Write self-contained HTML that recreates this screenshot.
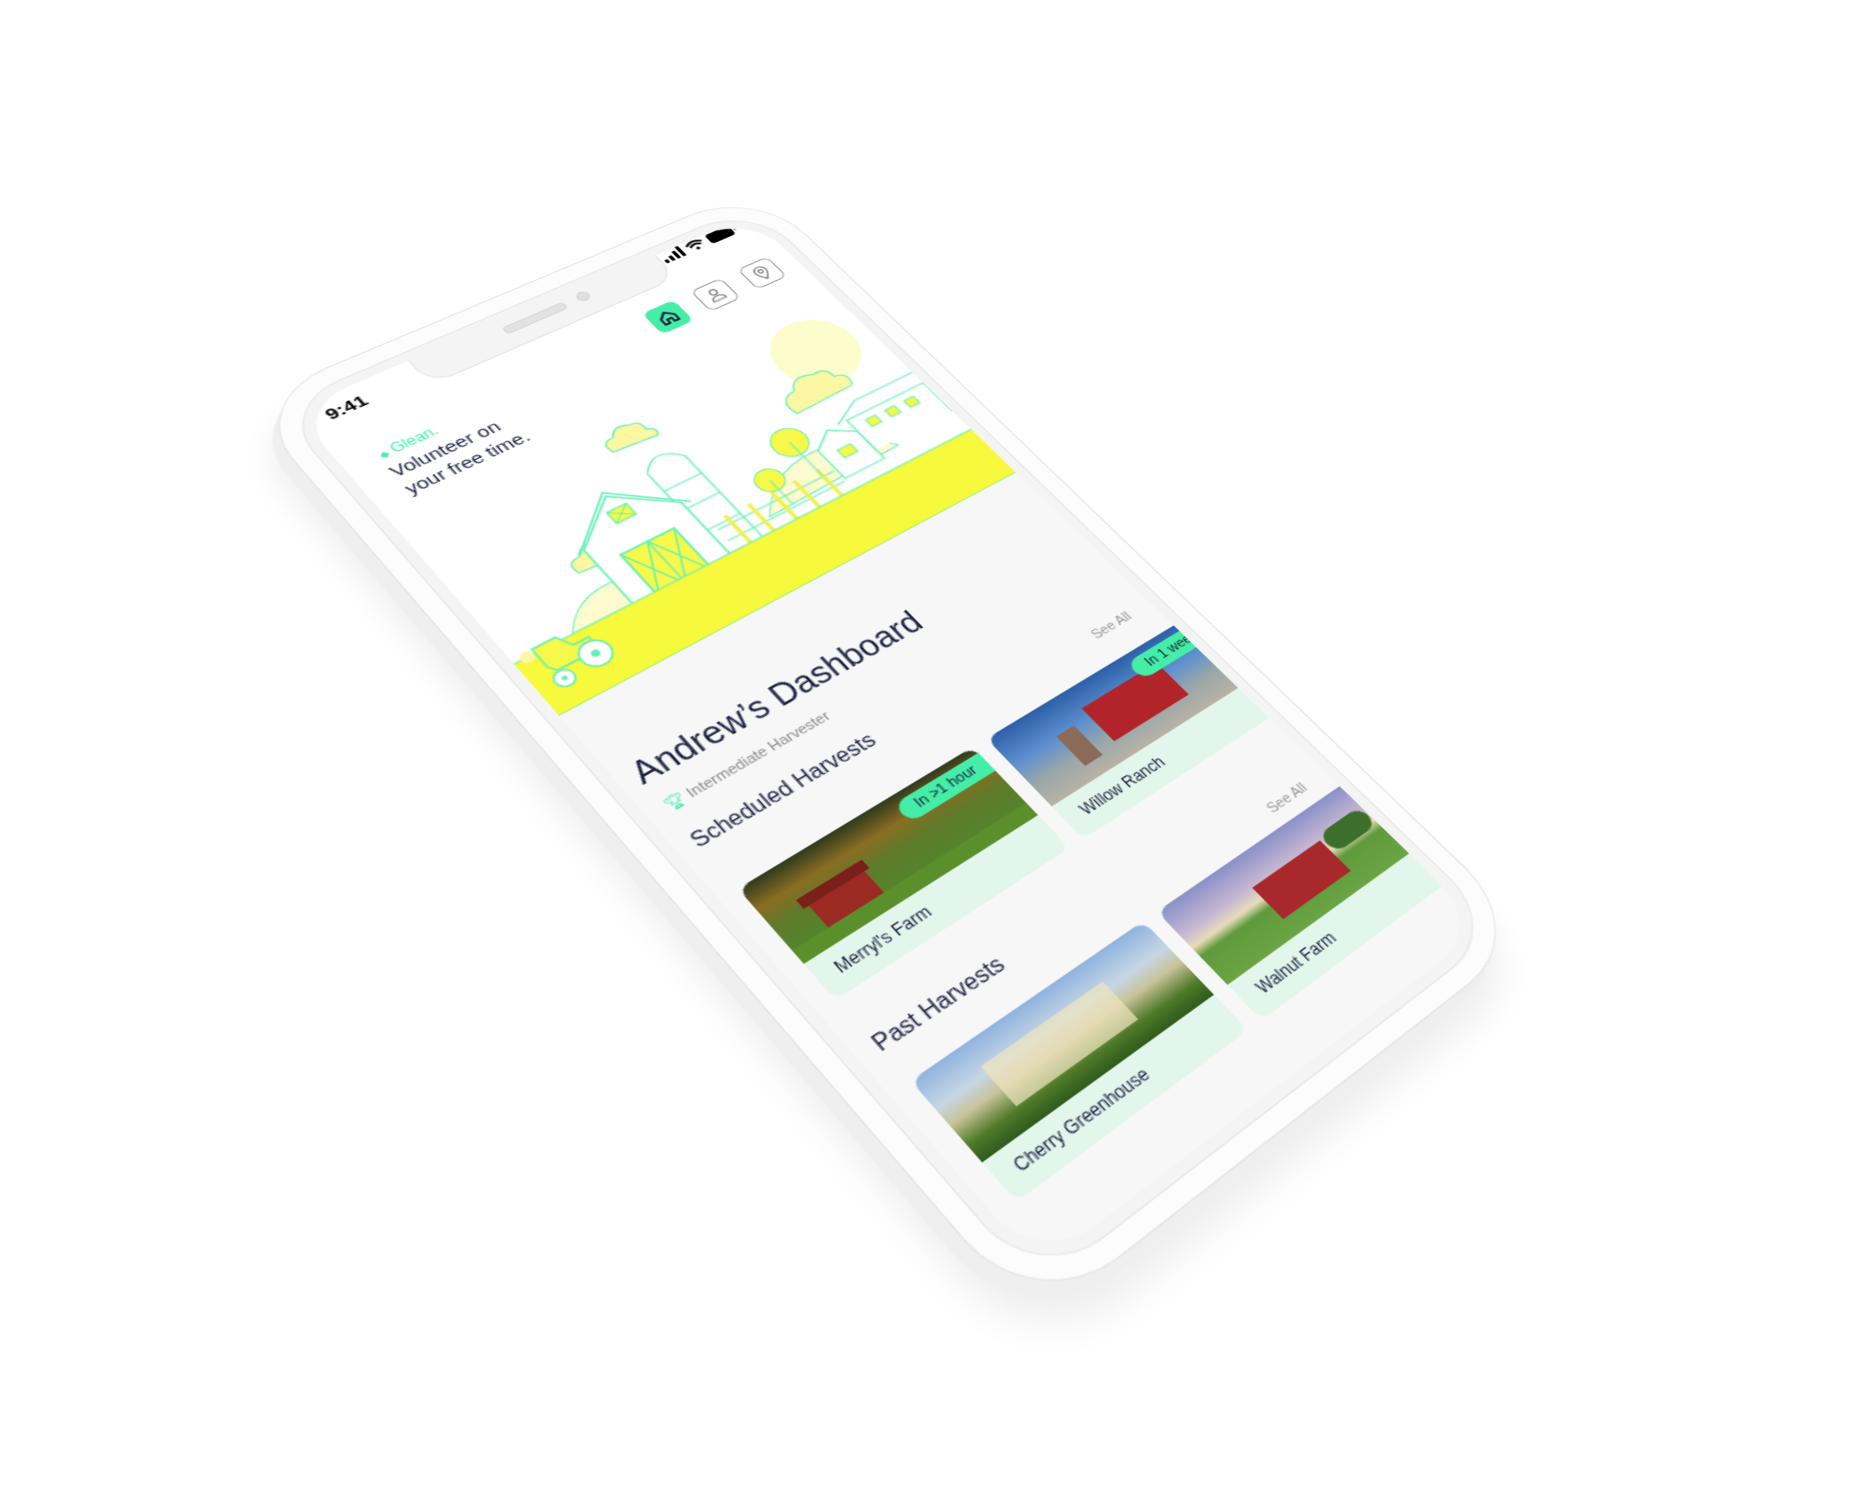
<!DOCTYPE html>
<html><head><meta charset="utf-8"><style>
html,body{margin:0;padding:0}
body{width:1866px;height:1500px;background:#fff;overflow:hidden;position:relative;font-family:"Liberation Sans",sans-serif}
#ph{position:absolute;left:0;top:0;width:390px;height:812px;transform-origin:0 0;
transform:matrix3d(1.40585,-0.43290,0,0.00031205, 0.69704,0.78488,0,-0.00021433, 0,0,1,0, 293,410,0,1)}
.abs{position:absolute}
.side{left:-34px;top:-16px;width:436px;height:858px;border-radius:66px;background:#efefef;box-shadow:-6px 14px 24px rgba(0,0,0,.07)}
.body{left:-24px;top:-24px;width:438px;height:860px;border-radius:64px;background:#fcfcfc;border:1px solid #e4e4e4;box-sizing:border-box}
.bez{left:-9px;top:-9px;width:408px;height:830px;border-radius:50px;background:#f4f4f4;border:1px solid #e6e6e6;box-sizing:border-box}
.scr{left:0;top:0;width:390px;height:812px;border-radius:42px;overflow:hidden;background:#f7f7f7}
.navy{color:#1d2140}
.card{position:absolute;width:191px;height:100px;border-radius:8px;overflow:hidden;background:#e3f6ec}
.img{position:absolute;left:0;top:0;width:191px;height:68px;border-radius:8px 8px 0 0;overflow:hidden}
.lbl{position:absolute;left:14px;top:76px;font-size:12px;color:#1d2140}
.badge{position:absolute;right:0;top:6px;background:#44eea6;color:#1d2140;font-size:11px;padding:3px 10px 3px 12px;border-radius:10px 0 0 10px}
.see{position:absolute;right:20px;font-size:11px;color:#9a9a9a}
</style></head><body>
<div id="ph">
 <div class="abs side"></div>
 <div class="abs body"></div>
 <div class="abs bez"></div>
 <div class="abs scr">
  <div class="abs" style="left:0;top:0;width:390px;height:326px;background:#fff"></div>
  <!-- notch -->
  <div class="abs" style="left:90px;top:-2px;width:210px;height:30px;background:#f4f4f4;border-radius:0 0 20px 20px;border:1px solid #e4e4e4;border-top:none"></div>
  <div class="abs" style="left:163px;top:6px;width:50px;height:6px;border-radius:3px;background:#e2e2e2;border:1px solid #d6d6d6"></div>
  <div class="abs" style="left:226px;top:4px;width:8px;height:8px;border-radius:50%;background:#e0e0e0;border:1px solid #cfcfcf"></div>
  <div class="abs" style="left:16px;top:9px;font-size:15px;font-weight:bold;color:#000">9:41</div>
  <!-- status icons -->
  <svg class="abs" style="left:304px;top:0px" width="70" height="14" viewBox="0 0 70 14">
   <rect x="0" y="8" width="3" height="4" rx="1" fill="#000"/><rect x="5" y="6" width="3" height="6" rx="1" fill="#000"/><rect x="10" y="3" width="3" height="9" rx="1" fill="#000"/><rect x="15" y="0" width="3" height="12" rx="1" fill="#000"/>
   <path d="M23 4.5 Q30 -1 37 4.5 M25 7 Q30 3 35 7" stroke="#000" stroke-width="2" fill="none"/><circle cx="30" cy="10" r="1.6" fill="#000"/>
   <rect x="42" y="1" width="22" height="11" rx="3" fill="#000"/><rect x="65" y="4.5" width="2" height="4" fill="#aaa"/>
  </svg>
  <!-- nav icons -->
  <div class="abs" style="left:257px;top:47px;width:28px;height:26px;border-radius:6px;background:#44eea6"></div>
  <svg class="abs" style="left:262px;top:51px" width="18" height="18" viewBox="0 0 18 18"><path d="M3 9 L9 3.5 L15 9 V15 H11 V11 H7 V15 H3 Z" fill="none" stroke="#1d2140" stroke-width="1.8" stroke-linejoin="round"/></svg>
  <div class="abs" style="left:301px;top:46px;width:28px;height:26px;border-radius:6px;border:1px solid #999;box-sizing:border-box"></div>
  <svg class="abs" style="left:306px;top:50px" width="18" height="18" viewBox="0 0 18 18"><circle cx="9" cy="6" r="2.8" fill="none" stroke="#777" stroke-width="1.2"/><path d="M3.5 15 Q3.5 10.5 9 10.5 Q14.5 10.5 14.5 15 Z" fill="none" stroke="#777" stroke-width="1.2"/></svg>
  <div class="abs" style="left:345px;top:45px;width:28px;height:26px;border-radius:6px;border:1px solid #999;box-sizing:border-box"></div>
  <svg class="abs" style="left:350px;top:49px" width="18" height="18" viewBox="0 0 18 18"><path d="M9 16 Q4 10 4 7 A5 5 0 0 1 14 7 Q14 10 9 16 Z" fill="none" stroke="#777" stroke-width="1.2"/><circle cx="9" cy="7" r="1.8" fill="none" stroke="#777" stroke-width="1.2"/></svg>
  <!-- header text -->
  <div class="abs" style="left:26px;top:61px;font-size:12px;color:#44eea6"><span style="font-size:8px">&#9670;</span> Glean.</div>
  <div class="abs navy" style="left:24px;top:78px;font-size:15px;line-height:19px">Volunteer on<br>your free time.</div>
  <!-- illustration -->
  <svg class="abs" style="left:0;top:102px" width="390" height="224" viewBox="0 90 390 224">
   <circle cx="342" cy="136" r="34" fill="#fdfccb"/>
   <g fill="#fbf7a3" stroke="#5ff0b4" stroke-width="1.2">
    <path d="M292 180 Q286 162 304 160 Q310 146 326 154 Q338 152 338 164 Q350 166 344 178 Z"/>
    <path d="M160 140 Q156 128 168 128 Q174 118 184 124 Q194 124 192 134 Q200 136 196 143 Z"/>
    <path d="M78 220 Q74 208 86 208 Q92 198 102 204 Q112 204 110 214 Q118 216 114 223 Z"/>
   </g>
   <path d="M40 270 Q60 232 100 240 Q120 246 130 262 Z" fill="#fdfbcf" stroke="#5ff0b4" stroke-width="1"/>
   <path d="M215 250 Q245 210 290 218 Q320 224 335 245 Z" fill="#fdfbcf" stroke="#5ff0b4" stroke-width="1"/>
   <path d="M168 262 V170 Q184 150 200 170 V262" fill="#fff" stroke="#5ff0b4" stroke-width="1.2"/>
   <path d="M168 190 H200 M168 212 H200 M168 236 H200" stroke="#5ff0b4" stroke-width="1"/>
   <path d="M92 268 V205 L132 172 L172 205 V268 Z" fill="#fff" stroke="#5ff0b4" stroke-width="1.4"/>
   <path d="M86 208 L132 168 L178 208" fill="none" stroke="#5ff0b4" stroke-width="1.4"/>
   <rect x="124" y="185" width="16" height="12" fill="#f7f94a" stroke="#5ff0b4" stroke-width="1.2"/>
   <path d="M124 185 L140 197 M140 185 L124 197" stroke="#5ff0b4"/>
   <rect x="110" y="222" width="44" height="46" fill="#f7f94a" stroke="#5ff0b4" stroke-width="1.6"/>
   <path d="M110 222 L132 268 L154 222 M110 268 L132 222 L154 268 M132 222 V268" stroke="#5ff0b4" stroke-width="1.2" fill="none"/>
   <path d="M178 240 H280 M178 252 H280" stroke="#5ff0b4" stroke-width="1.2"/>
   <g stroke="#f2f04a" stroke-width="3"><path d="M190 232 V262 M210 232 V262 M230 232 V262 M250 232 V262 M270 232 V262"/></g>
   <circle cx="270" cy="200" r="14" fill="#f7f94a" stroke="#5ff0b4"/><path d="M270 200 V240" stroke="#5ff0b4"/>
   <circle cx="236" cy="222" r="11" fill="#f7f94a" stroke="#5ff0b4"/><path d="M236 222 V250" stroke="#5ff0b4"/>
   <path d="M282 250 V218 L300 205 L318 218 V250 Z" fill="#fff" stroke="#5ff0b4" stroke-width="1.2"/>
   <rect x="294" y="225" width="12" height="9" fill="#f7f94a" stroke="#5ff0b4"/>
   <path d="M318 240 V205 H390 V240" fill="#fff" stroke="#5ff0b4" stroke-width="1.2"/>
   <path d="M310 205 L335 192 H390" fill="none" stroke="#5ff0b4" stroke-width="1.2"/>
   <rect x="330" y="212" width="9" height="8" fill="#f7f94a" stroke="#5ff0b4"/><rect x="348" y="212" width="9" height="8" fill="#f7f94a" stroke="#5ff0b4"/><rect x="366" y="212" width="9" height="8" fill="#f7f94a" stroke="#5ff0b4"/>
   <rect x="0" y="262" width="390" height="52" fill="#f7f93c"/>
   <path d="M0 262 H390 M0 314 H390" stroke="#5ff0b4" stroke-width="1.2"/>
   <circle cx="10" cy="262" r="5" fill="#fbf7a3"/>
   <path d="M16 276 V258 H34 L40 270 H52 V282 H20 Z" fill="#f7f94a" stroke="#5ff0b4" stroke-width="1.3"/>
   <circle cx="48" cy="284" r="11" fill="#fff" stroke="#5ff0b4" stroke-width="1.3"/><circle cx="48" cy="284" r="3" fill="#5ff0b4"/>
   <circle cx="20" cy="290" r="7" fill="#fff" stroke="#5ff0b4" stroke-width="1.3"/><circle cx="20" cy="290" r="2" fill="#5ff0b4"/>
  </svg>
  <!-- dashboard -->
  <div class="abs navy" style="left:12px;top:380px;font-size:25px;font-weight:500">Andrew’s Dashboard</div>
  <div class="abs" style="left:14px;top:418px;font-size:11px;color:#8c8c8c"><span style="color:#44eea6">&#127942;&#xFE0E;</span> Intermediate Harvester</div>
  <div class="abs navy" style="left:12px;top:449px;font-size:16px">Scheduled Harvests</div>
  <div class="see" style="top:470px">See All</div>
  <div class="card" style="left:14px;top:501px">
   <div class="img" style="background:linear-gradient(180deg,#2f3a1c 0%,#8a6d22 28%,#5e7a2a 52%,#4f8a2e 100%)">
    <div class="abs" style="left:28px;top:34px;width:44px;height:24px;background:#9b2a22"></div>
    <div class="abs" style="left:24px;top:28px;width:52px;height:8px;background:#7a1f1a"></div>
    <div class="abs" style="left:0;top:56px;width:191px;height:12px;background:#5a8f2c"></div>
   </div>
   <div class="badge">In &gt;1 hour</div>
   <div class="lbl">Merryl's Farm</div>
  </div>
  <div class="card" style="left:217px;top:501px">
   <div class="img" style="background:linear-gradient(180deg,#2d5fa8 0%,#5d8fd0 40%,#9aa7a8 70%,#b8b2a6 100%)">
    <div class="abs" style="left:70px;top:18px;width:70px;height:34px;background:#b0242a"></div>
    <div class="abs" style="left:40px;top:26px;width:16px;height:30px;background:#8b6a58"></div>
   </div>
   <div class="badge">In 1 week</div>
   <div class="lbl">Willow Ranch</div>
  </div>
  <div class="abs navy" style="left:14px;top:633px;font-size:16px">Past Harvests</div>
  <div class="see" style="top:652px">See All</div>
  <div class="card" style="left:16px;top:672px">
   <div class="img" style="background:linear-gradient(180deg,#8fb3df 0%,#c7d6e4 35%,#c9c39a 55%,#4f7a2a 80%,#2f5a1c 100%)">
    <div class="abs" style="left:40px;top:18px;width:100px;height:34px;background:rgba(240,230,190,.7)"></div>
   </div>
   <div class="lbl">Cherry Greenhouse</div>
  </div>
  <div class="card" style="left:219px;top:672px">
   <div class="img" style="background:linear-gradient(180deg,#8a90c8 0%,#c8b8d2 35%,#e8dcb8 50%,#5f9a3c 62%,#6aa444 100%)">
    <div class="abs" style="left:64px;top:24px;width:64px;height:30px;background:#a8282c"></div>
    <div class="abs" style="left:130px;top:20px;width:40px;height:18px;background:#3d6f2c;border-radius:10px"></div>
   </div>
   <div class="lbl">Walnut Farm</div>
  </div>
 </div>
</div>
</body></html>
